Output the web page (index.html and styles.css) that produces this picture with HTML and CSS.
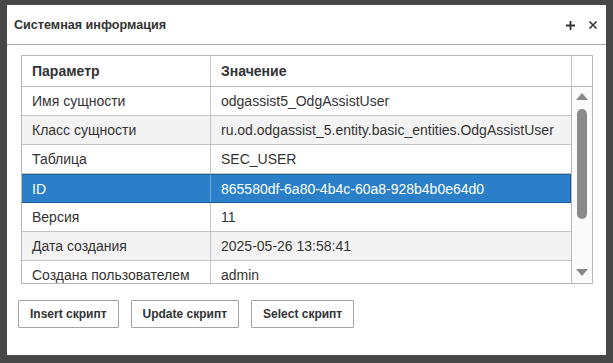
FILE: index.html
```html
<!DOCTYPE html>
<html lang="ru">
<head>
    <meta charset="UTF-8">
    <title>Системная информация</title>
    <link rel="stylesheet" href="styles.css">
</head>
<body>
    <div class="backdrop">
        <div class="modal">
            <div class="modal-header">
                <span class="modal-title">Системная информация</span>
                <span class="modal-tools">
                    <svg class="tool" width="11" height="11" viewBox="0 0 11 11"><path d="M5.5 1v9M1 5.5h9" stroke="#333" stroke-width="1.8"/></svg>
                    <svg class="tool" width="10" height="10" viewBox="0 0 10 10"><path d="M1.5 1.5l7 7M8.5 1.5l-7 7" stroke="#333" stroke-width="1.6"/></svg>
                </span>
            </div>

            <div class="modal-body">
                <div class="grid">
                    <div class="grid-head">
                        <div class="cell c1">Параметр</div>
                        <div class="cell c2">Значение</div>
                        <div class="cell c3"></div>
                    </div>
                    <div class="grid-main">
                        <div class="rows">
                            <div class="row"><div class="cell c1">Имя сущности</div><div class="cell c2">odgassist5_OdgAssistUser</div></div>
                            <div class="row alt"><div class="cell c1">Класс сущности</div><div class="cell c2">ru.od.odgassist_5.entity.basic_entities.OdgAssistUser</div></div>
                            <div class="row"><div class="cell c1">Таблица</div><div class="cell c2">SEC_USER</div></div>
                            <div class="row selected"><div class="cell c1">ID</div><div class="cell c2">865580df-6a80-4b4c-60a8-928b4b0e64d0</div></div>
                            <div class="row"><div class="cell c1">Версия</div><div class="cell c2">11</div></div>
                            <div class="row alt"><div class="cell c1">Дата создания</div><div class="cell c2">2025-05-26 13:58:41</div></div>
                            <div class="row"><div class="cell c1">Создана пользователем</div><div class="cell c2">admin</div></div>
                            <div class="row alt"><div class="cell c1">Дата изменения</div><div class="cell c2">2025-05-26 13:58:41</div></div>
                        </div>
                        <div class="scrollbar">
                            <span class="arrow up"></span>
                            <span class="thumb"></span>
                            <span class="arrow down"></span>
                        </div>
                    </div>
                </div>

                <div class="buttons">
                    <button class="btn">Insert скрипт</button>
                    <button class="btn">Update скрипт</button>
                    <button class="btn">Select скрипт</button>
                </div>
            </div>
        </div>
    </div>
</body>
</html>
```

FILE: styles.css
```css
body {
    margin: 0;
    font-family: "Liberation Sans", Arial, sans-serif;
    color: #333;
    background: #474747;
}
.backdrop {
    width: 613px;
    height: 363px;
    padding: 5px 7px 0 7px;
    box-sizing: border-box;
    background: #474747;
}
.modal {
    width: 599px;
    height: 350px;
    background: #fff;
    box-sizing: border-box;
}
.modal-header {
    height: 40px;
    border-bottom: 1px solid #a8a8a8;
    display: flex;
    align-items: center;
    justify-content: space-between;
    padding: 0 8px 0 7px;
    box-sizing: border-box;
}
.modal-title {
    font-size: 12.6px;
    font-weight: bold;
    color: #333;
    margin-top: 1px;
}
.modal-tools {
    display: flex;
    align-items: center;
    gap: 12px;
    margin-top: 1px;
}
.tool {
    display: block;
}
.modal-body {
    padding: 10px 0 0 14px;
}
.grid {
    width: 572px;
    border: 1px solid #b8b8b8;
    box-sizing: border-box;
}
.grid-head {
    display: flex;
    height: 30px;
    border-bottom: 1px solid #b8b8b8;
    font-weight: bold;
}
.cell {
    font-size: 14px;
    padding: 0 10px;
    box-sizing: border-box;
    display: flex;
    align-items: center;
    white-space: nowrap;
    overflow: hidden;
}
.c1 {
    width: 189px;
    border-right: 1px solid #c4c4c4;
}
.c2 {
    width: 361px;
}
.grid-head .c2 {
    border-right: 1px solid #c4c4c4;
}
.c3 {
    flex: 1;
}
.grid-main {
    display: flex;
    height: 196px;
    overflow: hidden;
}
.rows {
    width: 550px;
    border-right: 1px solid #b8b8b8;
    box-sizing: border-box;
}
.row {
    display: flex;
    height: 29px;
    border-bottom: 1px solid #c4c4c4;
    box-sizing: border-box;
    background: #fff;
}
.row .cell {
    height: 28px;
}
.row .c2 {
    flex: 1;
}
.row.alt {
    background: #f3f3f3;
}
.row.selected {
    background: #2a7fc8;
    color: #fff;
    border: 1px solid #1b5e9e;
    border-left: none;
}
.row.selected .cell {
    height: 27px;
}
.row.selected .c1 {
    border-right-color: #6fa6d8;
}
.scrollbar {
    flex: 1;
    background: #fafafa;
    display: flex;
    flex-direction: column;
    align-items: center;
}
.arrow {
    width: 0;
    height: 0;
    border-left: 6px solid transparent;
    border-right: 6px solid transparent;
}
.arrow.up {
    border-bottom: 7px solid #888;
    margin-top: 6px;
}
.arrow.down {
    border-top: 7px solid #888;
    margin-top: auto;
    margin-bottom: 7px;
}
.thumb {
    width: 10px;
    height: 110px;
    background: #8a8a8a;
    border-radius: 5px;
    margin-top: 9px;
}
.buttons {
    display: flex;
    gap: 12px;
    margin-top: 16px;
    margin-left: -3px;
}
.btn {
    height: 28px;
    padding: 0 11px;
    line-height: 26px;
    background: #fff;
    border: 1px solid #a4a4a4;
    border-radius: 1px;
    font-family: "Liberation Sans", Arial, sans-serif;
    font-size: 12px;
    font-weight: bold;
    color: #333;
    white-space: nowrap;
}
```
